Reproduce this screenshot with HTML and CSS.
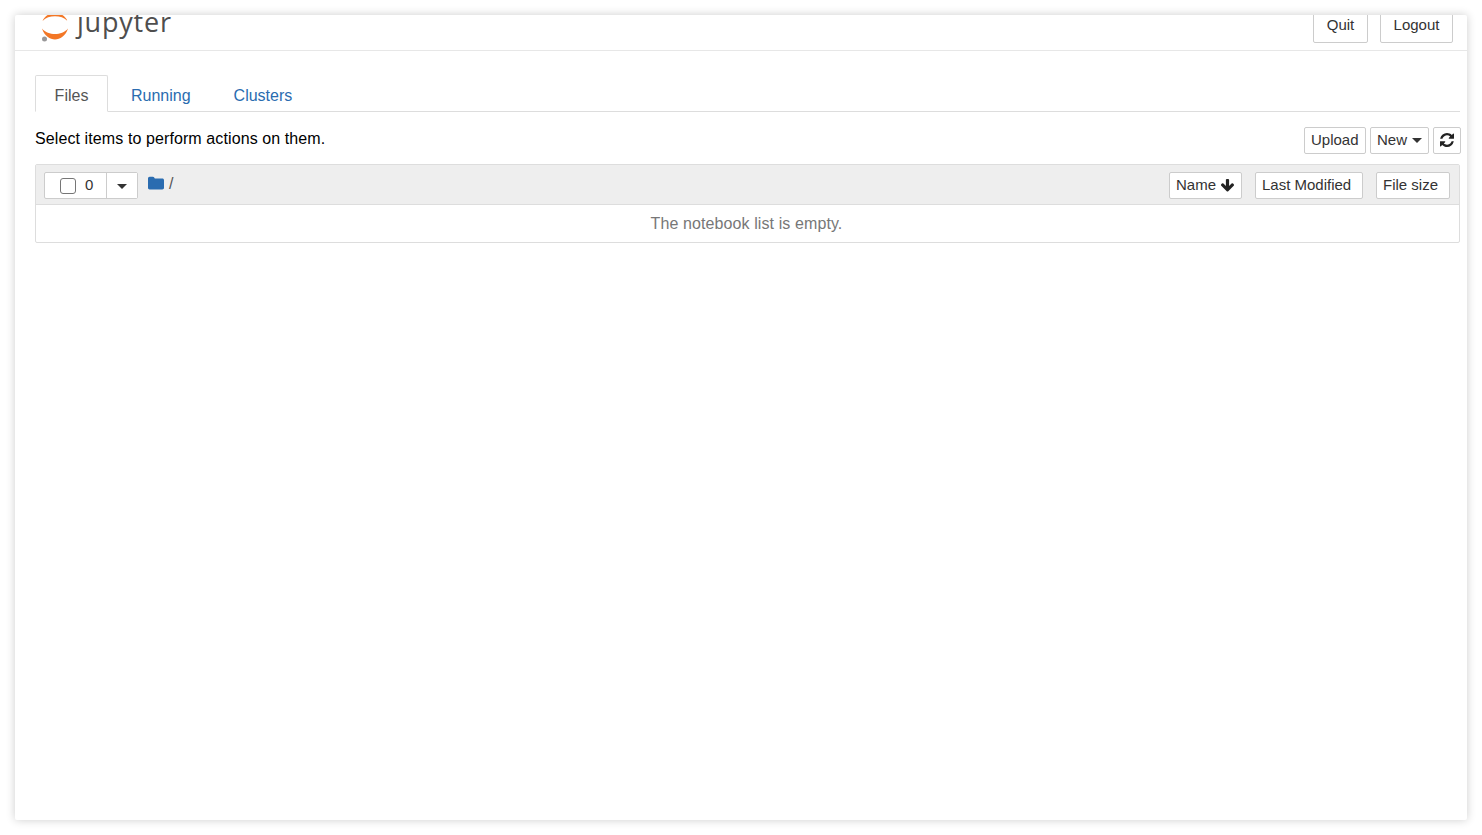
FILE: index.html
```html
<!DOCTYPE html>
<html lang="en">
<head>
<meta charset="utf-8">
<title>Home</title>
<link rel="stylesheet" href="styles.css">
</head>
<body>
<main class="page">
  <header class="topbar">
    <a class="logo">
      <svg class="logo-mark" width="28" height="30" viewBox="0 0 28 30">
        <path d="M1.500 9C4 3.500 9 1 14 1s10 2.500 12.500 8C23 5.500 19 4.200 14 4.200S5 5.500 1.500 9Z" fill="#f37726"/>
        <path d="M1 16.500C3.500 24 9 27.500 14 27.500s10.500-3.500 13-11C23.500 20.500 19 22 14 22S4.500 20.500 1 16.500Z" fill="#f37726"/>
        <circle cx="3.500" cy="27" r="2.500" fill="#989798"/>
      </svg>
      <span class="logo-text">jupyter</span>
    </a>
    <div class="top-actions">
      <button class="btn top-btn quit">Quit</button>
      <button class="btn top-btn logout">Logout</button>
    </div>
  </header>
  <section class="content">
    <nav class="tabs">
      <a class="tab active">Files</a>
      <a class="tab">Running</a>
      <a class="tab">Clusters</a>
    </nav>
    <div class="toolbar">
      <span class="hint">Select items to perform actions on them.</span>
      <div class="tools">
        <button class="btn small upload">Upload</button>
        <button class="btn small new">New <i class="caret"></i></button>
        <button class="btn small icon" aria-label="Refresh">
          <svg width="14" height="14" viewBox="128 128 1536 1536"><path fill="#222" d="M1639 1056q0 5-1 7-64 268-268 434.500t-478 166.500q-146 0-282.500-55t-243.500-157l-129 129q-19 19-45 19t-45-19-19-45v-448q0-26 19-45t45-19h448q26 0 45 19t19 45-19 45l-137 137q71 66 161 102t187 36q134 0 250-65t186-179q11-17 53-117 8-23 30-23h192q13 0 22.500 9.500t9.500 22.500zm25-800v448q0 26-19 45t-45 19h-448q-26 0-45-19t-19-45 19-45l138-138q-148-137-349-137-134 0-250 65t-186 179q-11 17-53 117-8 23-30 23h-199q-13 0-22.500-9.500t-9.500-22.500v-7q65-268 270-434.500t480-166.500q146 0 284 55.500t245 156.500l130-129q19-19 45-19t45 19 19 45z"/></svg>
        </button>
      </div>
    </div>
    <div class="list">
      <div class="list-head">
        <div class="select-group">
          <label class="select-main"><span class="check"></span><span class="count">0</span></label>
          <button class="select-caret" aria-label="Select"><i class="caret"></i></button>
        </div>
        <svg class="folder" width="16" height="14" viewBox="0 0 16 14"><path fill="#2a6cb0" d="M0 2.500C0 1.400.7.700 1.700.700h3c.8 0 1.300.4 1.700 1.100l.4.700h7.500c1 0 1.700.7 1.700 1.700v7.600c0 1-.7 1.700-1.700 1.700H1.700C.7 13.500 0 12.800 0 11.800Z"/></svg>
        <span class="crumb">/</span>
        <div class="sorts">
          <button class="btn small sort-name">Name
            <svg width="15" height="15" viewBox="0 0 1792 1792"><path fill="#222" d="M1675 832q0 53-37 90l-651 652q-39 37-91 37-53 0-90-37l-651-652q-38-36-38-90 0-53 38-91l74-75q39-37 91-37 53 0 90 37l294 295v-708q0-52 38-90t90-38h128q52 0 90 38t38 90v708l294-295q36-37 90-37 53 0 91 37l75 75q37 39 37 91z"/></svg>
          </button>
          <button class="btn small sort-mod">Last Modified</button>
          <button class="btn small sort-size">File size</button>
        </div>
      </div>
      <div class="empty">The notebook list is empty.</div>
    </div>
  </section>
</main>
</body>
</html>
```
FILE: styles.css
```css
* { box-sizing: border-box; }
html, body { margin: 0; padding: 0; height: 100%; background: #fff; overflow: hidden; }
body {
  padding: 15px;
  font-family: "Liberation Sans", Arial, sans-serif;
  font-size: 16px;
  color: #000;
}
.page {
  height: 805px;
  background: #fff;
  border-radius: 2px;
  box-shadow: 0 0 10px rgba(0, 0, 0, 0.2);
}
.topbar {
  height: 36px;
  border-bottom: 1px solid #e7e7e7;
  display: flex;
  align-items: flex-end;
  justify-content: space-between;
  overflow: hidden;
  padding: 0 14px 7px 26px;
}
.logo { display: flex; align-items: flex-end; height: 30px; margin-bottom: 1px; }
.logo-mark { margin-right: 8px; flex: none; }
.logo-text {
  font-family: "Open Sans", sans-serif;
  font-size: 27px;
  line-height: 30px;
  color: #4e4e4e;
  letter-spacing: 0.8px;
  position: relative;
  top: -5px;
}
.top-actions { display: flex; gap: 12px; }
.btn {
  font: inherit;
  background: #fff;
  border: 1px solid #ccc;
  color: #333;
  padding: 0;
  border-radius: 2px;
  white-space: nowrap;
}
.top-btn { height: 34px; font-size: 15px; padding-bottom: 3px; }
.quit { width: 55px; }
.logout { width: 73px; }
.content { padding: 24px 7px 0 20px; }
.tabs {
  display: flex;
  height: 37px;
  border-bottom: 1px solid #ddd;
}
.tab {
  height: 37px;
  padding: 10px 18px 0;
  line-height: 20px;
  color: #2a6cb0;
  margin-right: 5px;
  border: 1px solid transparent;
}
.tab.active {
  width: 73px;
  margin-right: 4px;
  text-align: center;
  padding-left: 0;
  padding-right: 0;
  color: #555;
  background: #fff;
  border-color: #ddd #ddd #fff;
  border-radius: 2px 2px 0 0;
}
.toolbar {
  display: flex;
  justify-content: space-between;
  margin-top: 15px;
  height: 37px;
}
.hint { line-height: 23px; letter-spacing: 0.1px; }
.tools { display: flex; gap: 4px; margin-right: -1px; align-items: flex-start; }
.small {
  height: 27px;
  padding: 0 6px 2px;
  font-size: 15px;
  display: inline-flex;
  align-items: center;
}
.upload { width: 62px; }
.new { width: 59px; }
.icon { width: 28px; justify-content: center; padding: 0 0 2px; }
.sort-name svg { margin-top: 2px; }
.caret {
  display: inline-block;
  width: 0;
  height: 0;
  margin-left: 5px;
  margin-top: 2px;
  border-top: 5px solid #333;
  border-left: 5px solid transparent;
  border-right: 5px solid transparent;
}
.list { border: 1px solid #ddd; border-radius: 2px; }
.list-head {
  height: 40px;
  background: #eee;
  border-bottom: 1px solid #ddd;
  display: flex;
  align-items: flex-start;
  padding: 7px 9px 0 8px;
}
.select-group { display: flex; height: 27px; background: #fff; border: 1px solid #ccc; border-radius: 2px; }
.select-main { width: 62px; display: flex; align-items: center; padding-left: 15px; border-right: 1px solid #ccc; }
.check { width: 16px; height: 16px; border: 1px solid #767676; border-radius: 3px; background: #fff; }
.count { margin-left: 9px; margin-bottom: 2px; color: #333; font-size: 15px; }
.select-caret { width: 30px; background: #fff; border: 0; padding: 0; display: flex; align-items: center; justify-content: center; }
.select-caret .caret { margin-left: 0; }
.folder { margin: 4px 5px 0 10px; }
.crumb { line-height: 22px; color: #555; margin-top: 1px; }
.sorts { margin-left: auto; display: flex; gap: 13px; }
.sort-name { width: 73px; }
.sort-name svg { margin-left: 4px; }
.sort-mod { width: 108px; }
.sort-size { width: 74px; }
.empty {
  height: 37px;
  line-height: 37px;
  text-align: center;
  color: #777;
  letter-spacing: 0.1px;
  padding-right: 2px;
}
```
